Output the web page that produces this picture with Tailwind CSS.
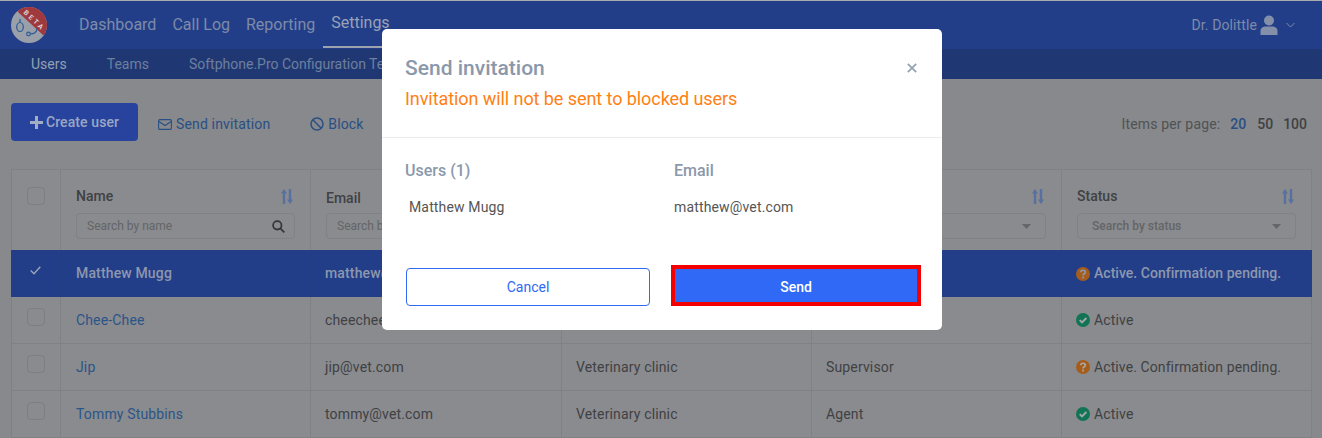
<!DOCTYPE html>
<html>
<head>
<meta charset="utf-8">
<script src="https://cdn.jsdelivr.net/npm/@tailwindcss/browser@4"></script>
</head>
<body class="m-0">
<div class="relative w-[1322px] h-[438px] overflow-hidden bg-[#87898c] font-['Roboto',sans-serif] text-[14px] text-[#3f4144]">
  <header class="h-[49px] bg-[#233e88] border-t border-[#a9abae] flex items-center pl-[11px] pr-[27px]">
    <svg class="w-[36px] h-[36px] shrink-0" viewBox="0 0 36 36">
      <defs><clipPath id="c"><circle cx="18" cy="18" r="18"/></clipPath></defs>
      <circle cx="18" cy="18" r="18" fill="#9aa0aa"/>
      <g clip-path="url(#c)"><path d="M7 5 L32 28 L40 28 L40 -4 L7 -4 Z" fill="#a0383e"/></g>
      <text x="0" y="0" transform="translate(12,6) rotate(43)" font-size="7" font-weight="700" letter-spacing="2.400" fill="#d0d2d6" font-family="Roboto">BETA</text>
      <path d="M9 12 V15.500" fill="none" stroke="#2c5a96" stroke-width="1.200"/>
      <ellipse cx="9" cy="20" rx="3.300" ry="4.500" fill="none" stroke="#2c5a96" stroke-width="1.200"/>
      <circle cx="17.500" cy="27" r="1.800" fill="none" stroke="#2c5a96" stroke-width="1.200"/>
      <path d="M19.500 26.800 C22.500 26.800 25 26.500 26.500 21" fill="none" stroke="#2c5a96" stroke-width="1.200"/>
    </svg>
    <nav class="flex items-center h-full ml-[32px] text-[16px] text-[#7d8ba8]">
      <a class="pr-[16px]">Dashboard</a>
      <a class="pr-[16px]">Call Log</a>
      <a class="pr-[8px]">Reporting</a>
      <a class="h-full flex items-center px-[8px] text-[#98a3b8] border-b-2 border-[#9da3ae] relative top-[-1px]">Settings</a>
    </nav>
    <div class="ml-auto flex items-center text-[14px] text-[#7d8ba8] tracking-[0.1px]">
      <span>Dr. Dolittle</span>
      <svg class="w-[18px] h-[20px] ml-[3px]" viewBox="0 0 18 20" fill="#8490aa"><circle cx="9" cy="5.500" r="5"/><path d="M0.500 20 V16 C0.500 13 3 11.500 5.500 11.500 H12.500 C15 11.500 17.500 13 17.500 16 V20 Z"/></svg>
      <svg class="w-[9px] h-[6px] ml-[8px]" viewBox="0 0 9 6" fill="none" stroke="#7d8ba8" stroke-width="1"><path d="M0.500 1 L4.500 5 L8.500 1"/></svg>
    </div>
  </header>
  <nav class="h-[30px] bg-[#1f3874] flex items-center pl-[31px] text-[#6e7f9e] text-[14px]">
    <a class="text-[#94a0b6] mr-[40px]">Users</a>
    <a class="mr-[40px]">Teams</a>
    <a>Softphone.Pro Configuration Templates</a>
  </nav>
  <section class="h-[90px] flex items-start pt-[24px] pl-[11px] pr-[15px]">
    <button class="w-[127px] h-[38px] rounded-[4px] bg-[#27439e] text-[#9ba7c2] flex items-center justify-center font-medium tracking-[0.1px]">
      <svg class="w-[13px] h-[13px] mr-[3px]" viewBox="0 0 13 13" fill="#a3aec4"><path d="M5 0H8V5H13V8H8V13H5V8H0V5H5Z"/></svg>Create user
    </button>
    <a class="ml-[20px] h-[38px] flex items-center text-[#2a4f84] tracking-[0.15px] pt-[4px]">
      <svg class="w-[14px] h-[11px] mr-[4px]" viewBox="0 0 14 11" fill="none" stroke="#2a4f84" stroke-width="1.100"><rect x="0.600" y="0.600" width="12.800" height="9.800" rx="1.200"/><path d="M0.800 2.500 L7 6.500 L13.200 2.500"/></svg>Send invitation
    </a>
    <a class="ml-[40px] h-[38px] flex items-center text-[#2a4f84] tracking-[0.15px] pt-[4px]">
      <svg class="w-[14px] h-[14px] mr-[4px]" viewBox="0 0 14 14" fill="none" stroke="#2a4f84" stroke-width="1.500"><circle cx="7" cy="7" r="6"/><path d="M2.800 2.800 L11.200 11.200"/></svg>Block
    </a>
    <div class="ml-auto h-[38px] flex items-center text-[#505254] pt-[4px]">
      <span class="tracking-[0.15px]">Items per page:</span>
      <span class="ml-[10px] text-[#2a4f84] font-medium">20</span>
      <span class="ml-[11px] text-[#3f4144] font-medium">50</span>
      <span class="ml-[10px] text-[#3f4144] font-medium">100</span>
    </div>
  </section>
  <div class="mx-[11px] w-[1301px] border-t border-[#7f8184] grid grid-cols-[50px_250px_251px_250px_250px_250px] bg-[#8a8b8e] tracking-[0.15px]">
    <!-- header -->
    <div class="h-[80px] border-l border-r border-[#7f8184] flex justify-center pt-[17px]"><span class="w-[18px] h-[18px] rounded-[4px] border border-[#7c7e81]"></span></div>
    <div class="h-[80px] border-r border-[#7f8184] px-[15px] pt-[18px]">
      <div class="flex justify-between items-center h-[17px] font-medium pr-[2px] tracking-normal"><span>Name</span><svg class="w-[12px] h-[15px]" viewBox="0 0 12 15" fill="#56709f"><path d="M3 0 L6 4.500 H4.200 V15 H1.800 V4.500 H0Z M9 15 L12 10.500 H10.200 V0 H7.800 V10.500 H6Z"/></svg></div>
      <div class="mt-[8px] h-[26px] rounded-[4px] border border-[#7f8184] flex items-center px-[10px] text-[12px] text-[#636568] tracking-normal"><span>Search by name</span><svg class="ml-auto w-[13px] h-[13px] mr-[-1px]" viewBox="0 0 13 13" fill="none" stroke="#34363a" stroke-width="1.800"><circle cx="5.300" cy="5.300" r="4.200"/><path d="M8.300 8.300 L12.300 12.300"/></svg></div>
    </div>
    <div class="h-[80px] border-r border-[#7f8184] px-[15px] pt-[18px]">
      <div class="h-[17px] font-medium tracking-normal">Email</div>
      <div class="mt-[8px] h-[26px] rounded-[4px] border border-[#7f8184] flex items-center px-[10px] text-[12px] text-[#636568] tracking-normal"><span>Search by email</span></div>
    </div>
    <div class="h-[80px] border-r border-[#7f8184]"></div>
    <div class="h-[80px] border-r border-[#7f8184] px-[15px] pt-[18px]">
      <div class="flex justify-between items-center h-[17px] pr-[2px]"><span></span><svg class="w-[12px] h-[15px]" viewBox="0 0 12 15" fill="#56709f"><path d="M3 0 L6 4.500 H4.200 V15 H1.800 V4.500 H0Z M9 15 L12 10.500 H10.200 V0 H7.800 V10.500 H6Z"/></svg></div>
      <div class="mt-[8px] h-[26px] rounded-[4px] border border-[#7f8184] flex items-center px-[10px]"><svg class="ml-auto w-[9px] h-[5px] mr-[4px]" viewBox="0 0 9 5" fill="#646669"><path d="M0 0H9L4.500 5Z"/></svg></div>
    </div>
    <div class="h-[80px] border-r border-[#7f8184] px-[15px] pt-[18px]">
      <div class="flex justify-between items-center h-[17px] font-medium pr-[2px] tracking-normal"><span>Status</span><svg class="w-[12px] h-[15px]" viewBox="0 0 12 15" fill="#56709f"><path d="M3 0 L6 4.500 H4.200 V15 H1.800 V4.500 H0Z M9 15 L12 10.500 H10.200 V0 H7.800 V10.500 H6Z"/></svg></div>
      <div class="mt-[8px] h-[26px] rounded-[4px] border border-[#7f8184] flex items-center px-[14px] text-[12px] text-[#636568] font-medium tracking-normal"><span>Search by status</span><svg class="ml-auto w-[9px] h-[5px]" viewBox="0 0 9 5" fill="#646669"><path d="M0 0H9L4.500 5Z"/></svg></div>
    </div>
    <!-- selected row -->
    <div class="h-[47px] bg-[#223e88] border-r border-[#233d82] flex justify-center pt-[16px]"><svg class="w-[11px] h-[9px]" viewBox="0 0 11 9" fill="none" stroke="#9aa5bc" stroke-width="1.400"><path d="M0.700 4.500 L4 7.800 L10.300 0.800"/></svg></div>
    <div class="h-[47px] bg-[#223e88] border-r border-[#233d82] px-[15px] flex items-center font-medium text-[#8d97ae]">Matthew Mugg</div>
    <div class="h-[47px] bg-[#223e88] border-r border-[#233d82] px-[14px] flex items-center font-medium text-[#8d97ae]">matthew@vet.com</div>
    <div class="h-[47px] bg-[#223e88] border-r border-[#233d82]"></div>
    <div class="h-[47px] bg-[#223e88] border-r border-[#233d82]"></div>
    <div class="h-[47px] bg-[#223e88] px-[14px] flex items-center font-medium text-[#8d97ae] whitespace-nowrap tracking-[0.03px]">
      <svg class="w-[14px] h-[14px] mr-[4px] shrink-0" viewBox="0 0 14 14"><circle cx="7" cy="7" r="7" fill="#a65d1c"/><path d="M4.800 5.300 C4.800 2.600 9.300 2.600 9.300 5.200 C9.300 6.800 7.100 6.800 7.100 8.400" fill="none" stroke="#8d97ae" stroke-width="1.700"/><rect x="6.200" y="9.600" width="1.800" height="1.800" fill="#8d97ae"/></svg>Active. Confirmation pending.
    </div>
    <!-- row 1 -->
    <div class="h-[47px] border-l border-r border-b border-[#7f8184] flex justify-center pt-[11px] pr-[1px]"><span class="w-[18px] h-[18px] rounded-[4px] border border-[#7c7e81]"></span></div>
    <div class="h-[47px] border-r border-b border-[#7f8184] px-[15px] flex items-center text-[#2a5589]">Chee-Chee</div>
    <div class="h-[47px] border-r border-b border-[#7f8184] px-[14px] flex items-center">cheechee@vet.com</div>
    <div class="h-[47px] border-r border-b border-[#7f8184] px-[14px] flex items-center">Veterinary clinic</div>
    <div class="h-[47px] border-r border-b border-[#7f8184] px-[14px] flex items-center">Agent</div>
    <div class="h-[47px] border-r border-b border-[#7f8184] px-[14px] flex items-center">
      <svg class="w-[14px] h-[14px] mr-[4px] shrink-0" viewBox="0 0 14 14"><circle cx="7" cy="7" r="7" fill="#127455"/><path d="M3.700 7.200 L6 9.500 L10.400 5" fill="none" stroke="#a5a8ab" stroke-width="1.800"/></svg>Active
    </div>
    <!-- row 2 -->
    <div class="h-[47px] border-l border-r border-b border-[#7f8184] flex justify-center pt-[11px] pr-[1px]"><span class="w-[18px] h-[18px] rounded-[4px] border border-[#7c7e81]"></span></div>
    <div class="h-[47px] border-r border-b border-[#7f8184] px-[15px] flex items-center text-[#2a5589]">Jip</div>
    <div class="h-[47px] border-r border-b border-[#7f8184] px-[14px] flex items-center">jip@vet.com</div>
    <div class="h-[47px] border-r border-b border-[#7f8184] px-[14px] flex items-center">Veterinary clinic</div>
    <div class="h-[47px] border-r border-b border-[#7f8184] px-[14px] flex items-center">Supervisor</div>
    <div class="h-[47px] border-r border-b border-[#7f8184] px-[14px] flex items-center whitespace-nowrap tracking-[0.1px]">
      <svg class="w-[14px] h-[14px] mr-[4px] shrink-0" viewBox="0 0 14 14"><circle cx="7" cy="7" r="7" fill="#a65d1c"/><path d="M4.800 5.300 C4.800 2.600 9.300 2.600 9.300 5.200 C9.300 6.800 7.100 6.800 7.100 8.400" fill="none" stroke="#a5a8ab" stroke-width="1.700"/><rect x="6.200" y="9.600" width="1.800" height="1.800" fill="#a5a8ab"/></svg>Active. Confirmation pending.
    </div>
    <!-- row 3 -->
    <div class="h-[47px] border-l border-r border-b border-[#7f8184] flex justify-center pt-[11px] pr-[1px]"><span class="w-[18px] h-[18px] rounded-[4px] border border-[#7c7e81]"></span></div>
    <div class="h-[47px] border-r border-b border-[#7f8184] px-[15px] flex items-center text-[#2a5589]">Tommy Stubbins</div>
    <div class="h-[47px] border-r border-b border-[#7f8184] px-[14px] flex items-center">tommy@vet.com</div>
    <div class="h-[47px] border-r border-b border-[#7f8184] px-[14px] flex items-center">Veterinary clinic</div>
    <div class="h-[47px] border-r border-b border-[#7f8184] px-[14px] flex items-center">Agent</div>
    <div class="h-[47px] border-r border-b border-[#7f8184] px-[14px] flex items-center">
      <svg class="w-[14px] h-[14px] mr-[4px] shrink-0" viewBox="0 0 14 14"><circle cx="7" cy="7" r="7" fill="#127455"/><path d="M3.700 7.200 L6 9.500 L10.400 5" fill="none" stroke="#a5a8ab" stroke-width="1.800"/></svg>Active
    </div>
  </div>

  <!-- modal -->
  <div class="absolute inset-0">
    <div class="absolute left-[382px] top-[29px] w-[560px] h-[301px] bg-white rounded-[5px] flex flex-col">
      <div class="h-[109px] border-b border-[#ececec] pl-[23px] pt-[26px] relative">
        <div class="text-[21px] leading-[26px] font-medium text-[#8a98ab]">Send invitation</div>
        <div class="mt-[6px] text-[18px] leading-[24px] text-[#ff7f15] tracking-[-0.07px]">Invitation will not be sent to blocked users</div>
        <svg class="absolute right-[25px] top-[34px] w-[10px] h-[10px]" viewBox="0 0 10 10" stroke="#97a3b3" stroke-width="1.800"><path d="M0.800 0.800 L9.200 9.200 M9.200 0.800 L0.800 9.200"/></svg>
      </div>
      <div class="grid grid-cols-[269px_1fr] pl-[23px] pt-[23px] text-[16px] leading-[19px] font-medium text-[#8a98ab]">
        <div>Users (1)</div><div>Email</div>
      </div>
      <div class="grid grid-cols-[269px_1fr] pl-[23px] pt-[18px] text-[14px] leading-[18px] text-[#555] tracking-[0.15px]">
        <div class="pl-[4px]">Matthew Mugg</div><div>matthew@vet.com</div>
      </div>
      <div class="flex items-end mt-[49px] pl-[24px] text-[14px]">
        <button class="w-[244px] h-[38px] rounded-[4px] border border-[#2f69f5] text-[#2f69f5] bg-white">Cancel</button>
        <button class="ml-[21px] w-[250px] h-[41px] border-[4px] border-[#f50000] bg-[#2f69f5] text-white font-medium pt-[3px]">Send</button>
      </div>
    </div>
  </div>
</div>
</body>
</html>
